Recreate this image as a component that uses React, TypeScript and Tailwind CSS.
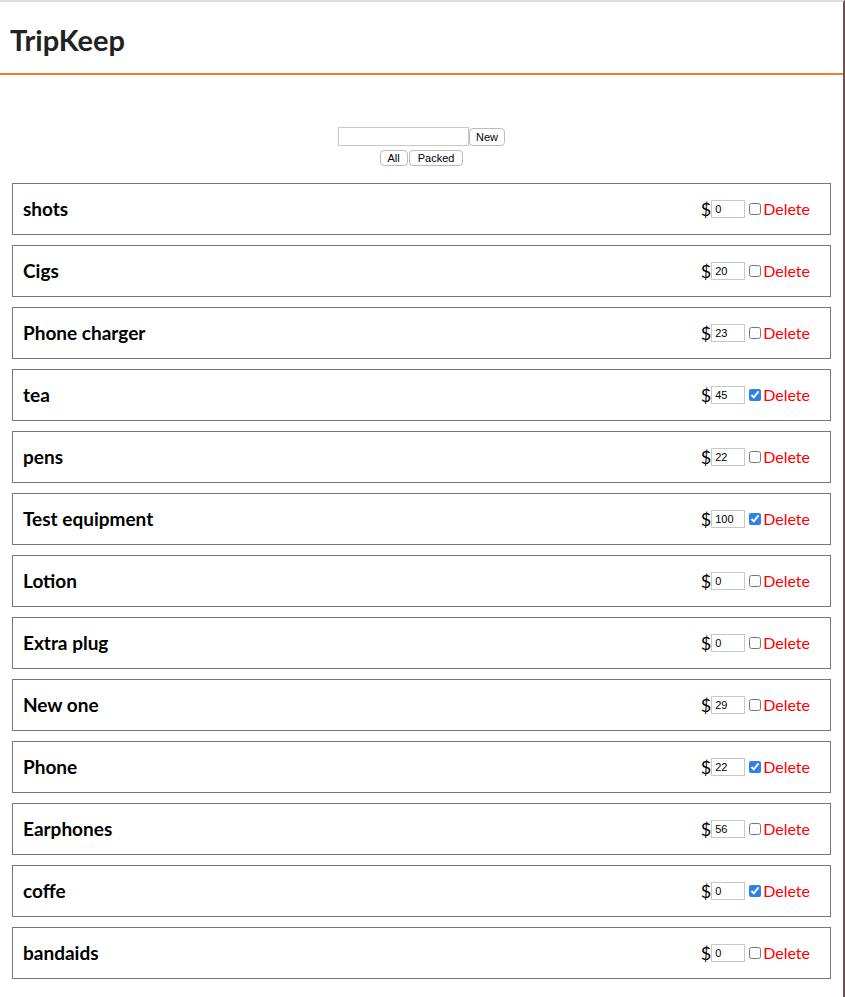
import { useState } from 'react';

interface Item {
  name: string;
  price: string;
  packed: boolean;
}

const initialItems: Item[] = [
  { name: 'shots', price: '0', packed: false },
  { name: 'Cigs', price: '20', packed: false },
  { name: 'Phone charger', price: '23', packed: false },
  { name: 'tea', price: '45', packed: true },
  { name: 'pens', price: '22', packed: false },
  { name: 'Test equipment', price: '100', packed: true },
  { name: 'Lotion', price: '0', packed: false },
  { name: 'Extra plug', price: '0', packed: false },
  { name: 'New one', price: '29', packed: false },
  { name: 'Phone', price: '22', packed: true },
  { name: 'Earphones', price: '56', packed: false },
  { name: 'coffe', price: '0', packed: true },
  { name: 'bandaids', price: '0', packed: false },
];

function ItemRow({ item, onToggle }: { item: Item; onToggle: () => void }) {
  return (
    <div className="flex items-center justify-between h-[52px] border border-[#777] pl-[10px] pr-[20px]">
      <div className="text-[19px] font-bold text-black">{item.name}</div>
      <div className="flex items-center">
        <span className="text-[18px] text-black leading-none">$</span>
        <input
          defaultValue={item.price}
          className="w-[34px] h-[18px] border border-[#c8c8c8] px-[3px] text-[11px] font-['Liberation_Sans',sans-serif] outline-none"
        />
        <input
          type="checkbox"
          checked={item.packed}
          onChange={onToggle}
          className="w-[12px] h-[12px] ml-[4px] mr-[2px] accent-[#2f80ed]"
        />
        <button className="text-[16px] text-[#f00] leading-none">Delete</button>
      </div>
    </div>
  );
}

export default function App() {
  const [items, setItems] = useState(initialItems);

  return (
    <div className="min-h-screen bg-white font-['Lato',sans-serif] border-t-2 border-t-[#dcdcdc] border-r-2 border-r-[#6e5252]">
      <header className="h-[73px] border-b-2 border-b-[#f47b2a] flex items-center pl-[10px]">
        <h1 className="text-[29px] font-bold text-[#222] mt-[4px]">TripKeep</h1>
      </header>
      <div className="flex flex-col items-center pt-[52px]">
        <div className="flex items-center">
          <input className="w-[131px] h-[19px] border border-[#c8c8c8] outline-none" />
          <button className="h-[18px] px-[6px] border border-[#bbb] rounded-[4px] text-[11px] font-['Liberation_Sans',sans-serif] bg-white">
            New
          </button>
        </div>
        <div className="flex items-center mt-[4px]">
          <button className="h-[16px] px-[7px] border border-[#bbb] rounded-[4px] text-[11px] font-['Liberation_Sans',sans-serif] bg-white leading-none">
            All
          </button>
          <button className="h-[16px] px-[8px] border border-[#bbb] rounded-[4px] text-[11px] font-['Liberation_Sans',sans-serif] bg-white leading-none ml-[1px]">
            Packed
          </button>
        </div>
      </div>
      <div className="flex flex-col gap-[10px] mt-[17px] ml-[12px] w-[819px]">
        {items.map((item, i) => (
          <ItemRow
            key={item.name}
            item={item}
            onToggle={() =>
              setItems(items.map((it, j) => (j === i ? { ...it, packed: !it.packed } : it)))
            }
          />
        ))}
      </div>
    </div>
  );
}
